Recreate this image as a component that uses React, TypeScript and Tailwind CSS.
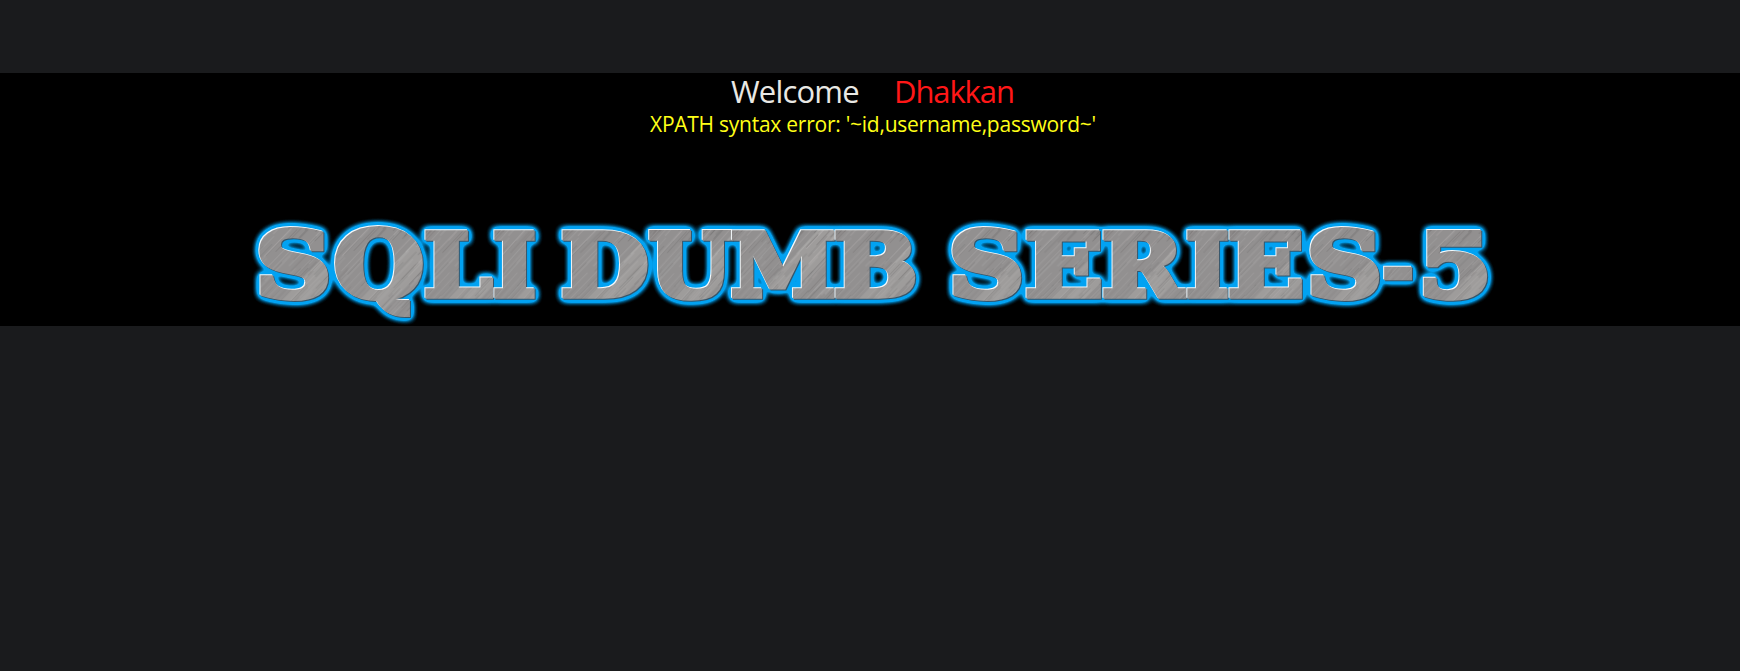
import React from "react";

const FONT = "'DejaVu Serif', serif";
const SIZE = 94;
const EDGE = 6;

// character, left, right, top, bottom of the inked area inside the banner
type Glyph = [string, number, number, number, number];

const GLYPHS: Glyph[] = [
  ["S", 259, 329, 227, 301],
  ["Q", 334, 423, 226, 316],
  ["L", 425, 494, 230, 299],
  ["I", 494, 535, 230, 299],
  ["D", 562, 648, 230, 299],
  ["U", 649, 733, 230, 301],
  ["M", 731, 835, 230, 299],
  ["B", 835, 916, 230, 299],
  ["S", 952, 1022, 227, 301],
  ["E", 1026, 1101, 230, 299],
  ["R", 1103, 1187, 230, 299],
  ["I", 1187, 1228, 230, 299],
  ["E", 1229, 1302, 230, 299],
  ["S", 1310, 1380, 227, 301],
  ["-", 1384, 1412, 266, 280],
  ["5", 1423, 1488, 230, 301],
];

const ctx = document.createElement("canvas").getContext("2d")!;

function fit([ch, l, r, t, b]: Glyph) {
  ctx.font = `bold ${SIZE}px ${FONT}`;
  const m = ctx.measureText(ch);
  const w = m.actualBoundingBoxRight + m.actualBoundingBoxLeft + EDGE;
  const h = m.actualBoundingBoxAscent + m.actualBoundingBoxDescent + EDGE;
  const sx = (r - l) / w;
  const sy = (b - t) / h;
  const tx = l + (m.actualBoundingBoxLeft + EDGE / 2) * sx;
  const ty = t + (m.actualBoundingBoxAscent + EDGE / 2) * sy;
  return `translate(${tx} ${ty}) scale(${sx} ${sy})`;
}

const STREAKS = Array.from({ length: 240 }, (_, i) => {
  const n = Math.abs(Math.sin(i * 12.9898 + 4.1) * 43758.5453) % 1;
  const k = Math.abs(Math.sin(i * 78.233 + 1.7) * 12543.123) % 1;
  return { y: (i * 7.3) % 134, x: k * 160, len: 15 + n * 45, light: n > 0.48, o: 0.12 + k * 0.28 };
});

function Banner() {
  return (
    <svg className="block h-[138px] w-full" viewBox="0 188 1740 138" role="img" aria-label="SQLI DUMB SERIES-5">
      <defs>
        <pattern id="steel" width="180" height="135" patternUnits="userSpaceOnUse" patternTransform="rotate(-50)">
          <rect width="180" height="135" fill="#929090" />
          <rect y="20" width="180" height="24" fill="#aaa7a6" opacity="0.5" />
          <rect y="78" width="180" height="20" fill="#7d7a79" opacity="0.5" />
          {STREAKS.map((s, i) => (
            <rect key={i} x={s.x - 20} y={s.y} width={s.len} height="0.9" fill={s.light ? "#c6c4c4" : "#5c5a5a"} opacity={s.o} />
          ))}
        </pattern>
        <filter id="bevel" x="-10%" y="-40%" width="120%" height="160%" colorInterpolationFilters="sRGB">
          <feFlood floodColor="#f4f8fa" />
          <feComposite in2="SourceAlpha" operator="in" />
          <feOffset dx="-1" dy="-1" result="hi" />
          <feFlood floodColor="#35566b" />
          <feComposite in2="SourceAlpha" operator="in" />
          <feOffset dx="0.6" dy="0.6" result="lo" />
          <feMerge>
            <feMergeNode in="lo" />
            <feMergeNode in="hi" />
            <feMergeNode in="SourceGraphic" />
          </feMerge>
        </filter>
        <filter id="glow" filterUnits="userSpaceOnUse" x="230" y="200" width="1290" height="130" colorInterpolationFilters="sRGB">
          <feGaussianBlur in="SourceAlpha" stdDeviation="3.6" />
          <feComponentTransfer result="halo">
            <feFuncA type="linear" slope="4.6" intercept="-0.06" />
          </feComponentTransfer>
          <feFlood floodColor="#02a2f2" />
          <feComposite in2="halo" operator="in" result="blue" />
          <feMerge>
            <feMergeNode in="blue" />
            <feMergeNode in="SourceGraphic" />
          </feMerge>
        </filter>
      </defs>
      <g filter="url(#glow)">
        {GLYPHS.map((g, i) => (
          <g key={i} filter="url(#bevel)">
            <text
              transform={fit(g)}
              fontFamily={FONT}
              fontWeight="bold"
              fontSize={SIZE}
              fill="url(#steel)"
              stroke="url(#steel)"
              strokeWidth={EDGE}
              strokeLinejoin="miter"
            >
              {g[0]}
            </text>
          </g>
        ))}
      </g>
    </svg>
  );
}

export default function App() {
  return (
    <div className="min-h-screen bg-[#1a1b1d] pt-[73px] font-['Open_Sans','Noto_Sans',sans-serif]">
      <main className="flex h-[253px] flex-col justify-between bg-black">
        <div>
          <h1 className="ml-[731px] flex h-[37px] items-center text-[31px] leading-[37px] font-normal whitespace-nowrap">
            <span className="w-[163px] tracking-[-0.8px] text-[#e9e8e4]">Welcome</span>
            <span className="tracking-[-1.1px] text-[#ff1717]">Dhakkan</span>
          </h1>
          <p className="ml-[650px] text-[21px] leading-[29px] font-[450] tracking-[-0.25px] whitespace-nowrap text-[#ffff17]">
            XPATH syntax error: '~id,username,password~'
          </p>
        </div>
        <Banner />
      </main>
    </div>
  );
}
